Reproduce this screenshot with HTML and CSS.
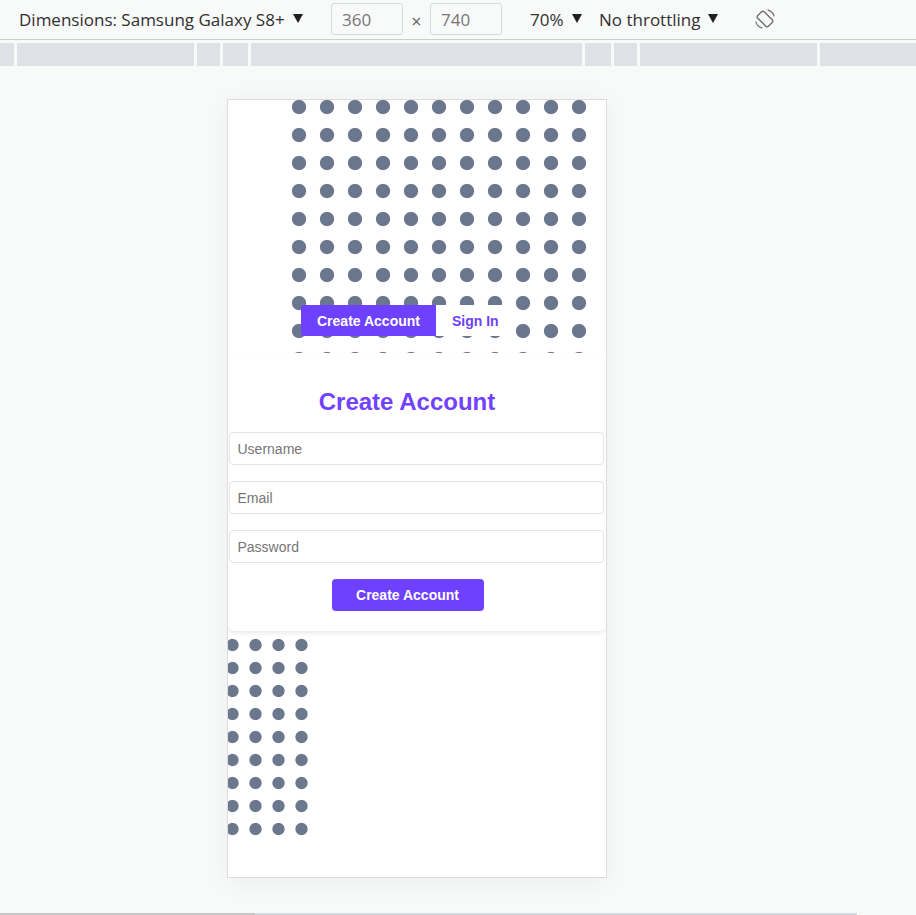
FILE: index.html
```html
<!DOCTYPE html>
<html lang="en">
<head>
<meta charset="utf-8">
<title>Device preview</title>
<link rel="stylesheet" href="styles.css">
</head>
<body>
<div class="page">
  <header class="toolbar">
    <div class="tb-device">
      <span class="tb-label">Dimensions: Samsung Galaxy S8+</span>
      <span class="tb-caret"></span>
    </div>
    <div class="tb-size">
      <span class="tb-input">360</span>
      <span class="tb-times">×</span>
      <span class="tb-input">740</span>
    </div>
    <div class="tb-zoom">
      <span class="tb-label">70%</span>
      <span class="tb-caret"></span>
    </div>
    <div class="tb-throttle">
      <span class="tb-label">No throttling</span>
      <span class="tb-caret"></span>
    </div>
    <div class="tb-rotate">
      <svg width="22" height="22" viewBox="0 0 22 22" aria-hidden="true">
        <rect x="6.5" y="3.5" width="9" height="15" rx="1.8" transform="rotate(-45 11 11)" fill="none" stroke="#707070" stroke-width="1.4"/>
        <path d="M13.6 1.8 A9.4 9.4 0 0 1 20.2 8.4" fill="none" stroke="#707070" stroke-width="1.2"/>
        <path d="M8.4 20.2 A9.4 9.4 0 0 1 1.8 13.6" fill="none" stroke="#707070" stroke-width="1.2"/>
      </svg>
    </div>
  </header>

  <div class="ruler">
    <span class="seg s1"></span>
    <span class="seg s2"></span>
    <span class="seg s3"></span>
    <span class="seg s4"></span>
    <span class="seg s5"></span>
    <span class="seg s6"></span>
    <span class="seg s7"></span>
    <span class="seg s8"></span>
    <span class="seg s9"></span>
  </div>

  <main class="stage">
    <div class="device">
      <div class="dots-top">
        <div class="tabs">
          <button class="tab tab-active" type="button">Create Account</button>
          <button class="tab" type="button">Sign In</button>
        </div>
      </div>

      <section class="card">
        <h2 class="card-title">Create Account</h2>
        <form class="form">
          <input class="field" type="text" placeholder="Username">
          <input class="field" type="email" placeholder="Email">
          <input class="field" type="password" placeholder="Password">
          <div class="actions">
            <button class="submit" type="button">Create Account</button>
          </div>
        </form>
      </section>

      <div class="dots-bottom"></div>
    </div>
  </main>

  <div class="hscroll">
    <span class="hs-thumb"></span>
    <span class="hs-track"></span>
  </div>
</div>
</body>
</html>
```

FILE: styles.css
```css
* {
  box-sizing: border-box;
}

html, body {
  margin: 0;
  padding: 0;
  background: #f8f9f9;
}

.page {
  height: 915px;
  display: flex;
  flex-direction: column;
  overflow: hidden;
}

/* ---------- toolbar ---------- */
.toolbar {
  height: 40px;
  flex: none;
  display: flex;
  align-items: center;
  border-bottom: 1px solid #cbced1;
  font-family: "Open Sans", "Noto Sans", sans-serif;
  font-size: 17px;
  color: #303030;
  padding-left: 19px;
  padding-bottom: 1px;
}

.tb-caret {
  width: 0;
  height: 0;
  border-left: 5px solid transparent;
  border-right: 5px solid transparent;
  border-top: 9px solid #1f1f1f;
  margin-left: 8px;
  margin-top: -2px;
}

.tb-device {
  width: 312px;
  display: flex;
  align-items: center;
}

.tb-size {
  display: flex;
  align-items: center;
  width: 199px;
}

.tb-input {
  width: 72px;
  height: 32px;
  border: 1px solid #d8dadc;
  border-radius: 3px;
  color: #777;
  padding-left: 10px;
  display: flex;
  align-items: center;
  font-size: 17px;
}

.tb-times {
  width: 27px;
  text-align: center;
  color: #666;
  font-size: 18px;
  position: relative;
  top: 2px;
}

.tb-zoom {
  display: flex;
  align-items: center;
  width: 69px;
}

.tb-throttle {
  display: flex;
  align-items: center;
  width: 155px;
}

.tb-rotate {
  width: 22px;
  height: 22px;
  display: flex;
}

/* ---------- ruler ---------- */
.ruler {
  flex: none;
  margin-top: 3px;
  height: 23px;
  display: flex;
  gap: 3px;
}

.seg {
  background: #dee1e5;
  height: 100%;
}

.s1 { width: 14px; }
.s2 { width: 177px; }
.s3 { width: 23px; }
.s4 { width: 25px; }
.s5 { width: 331px; }
.s6 { width: 26px; }
.s7 { width: 23px; }
.s8 { width: 177px; }
.s9 { flex: 1; }

/* ---------- stage / device ---------- */
.stage {
  flex: none;
  padding-top: 33px;
  padding-left: 227px;
}

.device {
  width: 380px;
  height: 779px;
  border: 1px solid #dcdcdc;
  background: #fff;
  overflow: hidden;
  box-shadow: 0 4px 24px rgba(0, 0, 0, 0.05);
  font-family: "Liberation Sans", Arial, sans-serif;
}

.dots-top {
  position: relative;
  margin-left: 56.5px;
  margin-top: -7px;
  width: 308px;
  height: 260px;
  background-image: radial-gradient(circle at 14px 14px, #6b778d 6.6px, rgba(107, 119, 141, 0) 7.6px);
  background-size: 28px 28px;
}

.tabs {
  position: absolute;
  left: 16.5px;
  top: 212px;
  display: flex;
}

.tab {
  height: 31px;
  padding: 0 16px;
  border: none;
  background: #fff;
  color: #6d41ff;
  font-family: "Liberation Sans", Arial, sans-serif;
  font-weight: 700;
  font-size: 14px;
  border-radius: 0 3px 3px 0;
  cursor: pointer;
}

.tab-active {
  background: #6d41ff;
  color: #fff;
  border-radius: 3px 0 0 3px;
}

.card {
  height: 278px;
  padding-top: 35px;
  border-radius: 0 0 7px 7px;
  box-shadow: 0 2px 5px rgba(0, 0, 0, 0.09);
  background: #fff;
}

.card-title {
  margin: 0 0 16px;
  width: 358px;
  text-align: center;
  font-size: 24px;
  line-height: 28px;
  font-weight: 700;
  color: #7042ff;
}

.form {
  display: flex;
  flex-direction: column;
  gap: 16px;
  padding-left: 0.5px;
}

.field {
  width: 375px;
  height: 33px;
  margin: 0;
  border: 1px solid #e4e4e4;
  border-radius: 4px;
  padding: 0 8px;
  font-family: "Liberation Sans", Arial, sans-serif;
  font-size: 14px;
  color: #333;
  background: #fff;
}

.field::placeholder {
  color: #767676;
}

.actions {
  width: 358px;
  display: flex;
  justify-content: center;
}

.submit {
  width: 152px;
  height: 32px;
  border: none;
  border-radius: 4px;
  background: #6d41ff;
  color: #fff;
  font-family: "Liberation Sans", Arial, sans-serif;
  font-weight: 700;
  font-size: 14px;
  cursor: pointer;
}

.dots-bottom {
  margin-top: 3px;
  margin-left: -7px;
  width: 92px;
  height: 207px;
  background-image: radial-gradient(circle at 11.5px 11px, #6b778d 5.6px, rgba(107, 119, 141, 0) 6.6px);
  background-size: 23px 23px;
}

/* ---------- bottom scrollbar strip ---------- */
.hscroll {
  margin-top: auto;
  height: 2px;
  display: flex;
  flex: none;
}

.hs-thumb {
  width: 255px;
  background: #c6c6c6;
}

.hs-track {
  width: 602px;
  background: #d3dadd;
}
```
